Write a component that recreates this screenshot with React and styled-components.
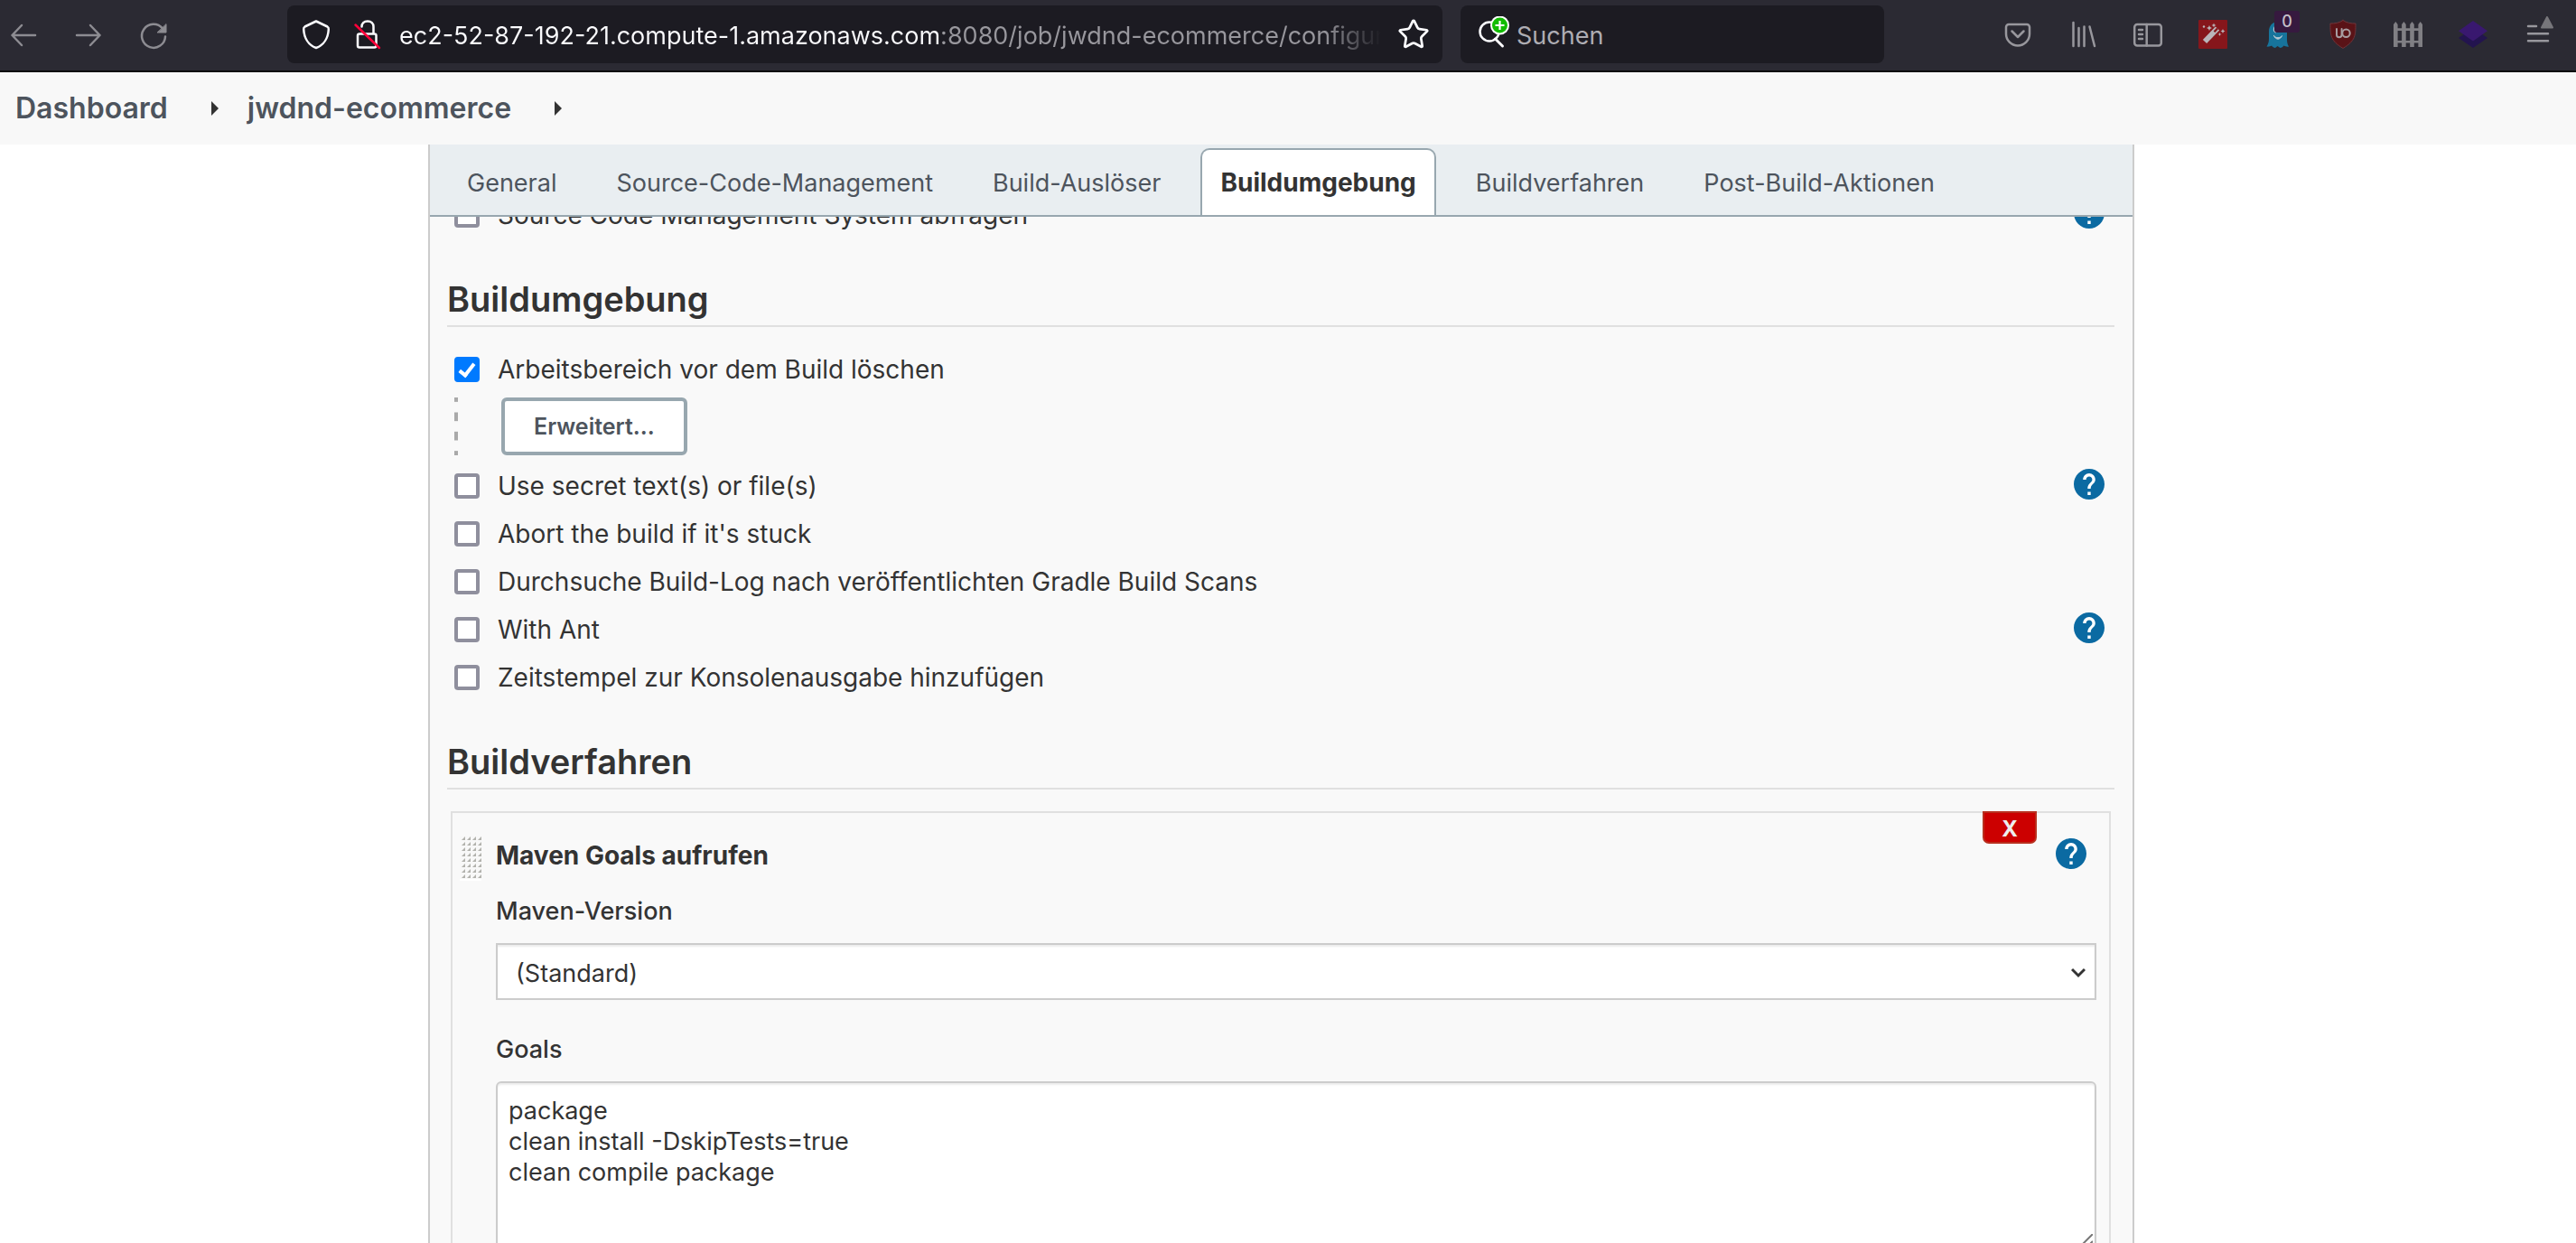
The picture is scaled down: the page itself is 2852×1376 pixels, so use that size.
import React from "react";
import styled, { createGlobalStyle, css } from "styled-components";
import { Star } from "lucide-react";

const GlobalStyle = createGlobalStyle`
  *, *::before, *::after { box-sizing: border-box; }
  body { margin: 0; background: #fff; }
  body, button, input, select, textarea {
    font-family: Inter, "Liberation Sans", sans-serif;
  }
`;

const Page = styled.div`
  display: flex;
  flex-direction: column;
  height: 100vh;
  overflow: hidden;
  color: #333;
  font-size: 28px;
`;

/* ---------- browser toolbar ---------- */

const BrowserBar = styled.header`
  display: flex;
  flex: none;
  align-items: center;
  height: 80px;
  padding: 6px 26px 8px 10px;
  background: #2b2a33;
  border-bottom: 2px solid #0c0c0d;
`;

const IconGroup = styled.div`
  display: flex;
  flex: none;
  gap: 40px;
`;

const IconButton = styled.button`
  position: relative;
  display: block;
  flex: none;
  width: 32px;
  height: 32px;
  padding: 0;
  border: 0;
  background: none;
  color: ${(p) => p.$color || "#98979d"};

  svg {
    display: block;
    overflow: visible;
  }
`;

const Badge = styled.span`
  position: absolute;
  left: 12px;
  top: -10px;
  width: 28px;
  height: 24px;
  border-radius: 3px;
  background: #36193f;
  color: #c4bfc8;
  font-size: 18px;
  font-weight: 500;
  line-height: 24px;
  text-align: center;
`;

const Field = styled.div`
  display: flex;
  flex: ${(p) => p.$grow} 1 0;
  align-items: center;
  gap: ${(p) => p.$gap};
  min-width: 0;
  height: 64px;
  padding: 0 16px;
  border-radius: 8px;
  background: #1c1b22;
`;

const AddressField = styled(Field)`
  margin: 0 20px 0 132px;
`;

const SearchField = styled(Field)`
  margin-right: 132px;
  padding: 0 20px;
`;

const FieldIcons = styled.div`
  display: flex;
  flex: none;
  gap: 24px;
`;

const BarInput = styled.input`
  flex: 1;
  min-width: 0;
  height: 40px;
  padding: 2px 0 0;
  border: 0;
  outline: 0;
  background: none;
  color: #fbfbfe;
  font-size: 27px;

  &::placeholder {
    color: #aeadb3;
    opacity: 1;
  }
`;

const AddressInput = styled(BarInput)`
  background-image: linear-gradient(
    90deg,
    #fbfbfe 600px,
    #98979d 600px,
    #98979d calc(100% - 64px),
    #1c1b22 100%
  );
  -webkit-background-clip: text;
  background-clip: text;
  color: transparent;
`;

/* ---------- breadcrumbs ---------- */

const Breadcrumbs = styled.nav`
  display: flex;
  flex: none;
  align-items: center;
  height: 80px;
  padding: 0 17px;
  background: #f8f8f8;
`;

const Crumb = styled.a`
  color: #4d545d;
  font-size: 32px;
  font-weight: 600;
  line-height: 40px;
  text-decoration: none;
`;

const CrumbArrow = styled.span`
  margin: 0 32px 0 48px;
  border: 8px solid transparent;
  border-right: 0;
  border-left-color: #333;
`;

/* ---------- configuration form ---------- */

const Viewport = styled.main`
  flex: 1;
  min-height: 0;
  overflow: hidden;
  padding: 0 489px 0 474px;
`;

const Panel = styled.div`
  border: solid #ccc;
  border-width: 0 2px;
  background: #f9f9f9;
`;

const TabBar = styled.nav`
  position: sticky;
  top: 0;
  z-index: 1;
  display: flex;
  gap: 22px;
  height: 80px;
  padding: 4px 19px 0;
  background: #e9eef1;
  border-bottom: 2px solid #98a7af;
`;

const Tab = styled.a`
  display: flex;
  align-items: center;
  padding: 0 20px;
  border: 2px solid transparent;
  border-bottom: 0;
  border-radius: 10px 10px 0 0;
  color: #4d545d;
  font-size: 27px;
  text-decoration: none;
  white-space: nowrap;

  ${(p) =>
    p.$active &&
    css`
      border-color: #98a7af;
      background: #fff;
      color: #333;
      font-size: 28px;
      font-weight: 700;
    `}
`;

const SCROLLED_BY = "29px";

const Form = styled.form`
  margin-top: -${SCROLLED_BY};
  padding: 0 20px 0 19px;
`;

const SectionTitle = styled.h2`
  margin: 44px 0 20px;
  padding-bottom: 6px;
  border-bottom: 2px solid #e0e0e0;
  font-size: 38px;
  font-weight: 600;
  line-height: 46px;
`;

const OptionRow = styled.div`
  display: flex;
  align-items: center;
  justify-content: space-between;
  height: 53px;
  padding: 0 11px 0 8px;
`;

const OptionLabel = styled.label`
  display: flex;
  align-items: center;
  gap: 20px;
  line-height: 34px;
`;

const Checkbox = styled.input`
  appearance: none;
  display: grid;
  place-items: center;
  width: 28px;
  height: 28px;
  margin: 0;
  border: 4px solid #8f8f9d;
  border-radius: 4px;
  background: #fff;

  &:checked {
    border-color: #007aff;
    background: #007aff;
  }

  &:checked::before {
    content: "";
    width: 10px;
    height: 18px;
    margin-bottom: 4px;
    border: solid #fff;
    border-width: 0 4px 4px 0;
    transform: rotate(38deg);
  }
`;

const HelpButton = styled.button`
  flex: none;
  width: 34px;
  height: 34px;
  margin: 0 0 4px;
  padding: 0;
  border: 0;
  border-radius: 50%;
  background: #fff;
  color: #0b6aa2;

  svg {
    display: block;
  }
`;

const Nested = styled.div`
  display: flex;
  gap: 48px;
  margin: 5px 8px 7px;

  &::before {
    content: "";
    width: 4px;
    background: linear-gradient(#a9a9a9 5px, transparent 5px 16px, #a9a9a9 16px);
    background-size: 4px 21px;
    background-repeat: round;
  }
`;

const AdvancedButton = styled.button`
  height: 64px;
  padding: 0 32px;
  border: 4px solid #98a7af;
  border-radius: 6px;
  background: #fff;
  color: #4d545d;
  font-size: 25px;
  font-weight: 600;
`;

const BuildStep = styled.section`
  position: relative;
  display: grid;
  grid-template-columns: 24px 1fr;
  gap: 16px;
  margin: 24px 4px 0;
  padding: 20px 14px 40px 8px;
  border: 2px solid #e0e0e0;
`;

const DragHandle = styled.div`
  height: 50px;
  margin-top: 5px;
  background: #fff;
  cursor: move;

  svg {
    display: block;
  }
`;

const DeleteButton = styled.button`
  position: absolute;
  top: -2px;
  right: 80px;
  width: 60px;
  height: 36px;
  padding: 2px 0 0;
  border: 2px solid #b8301f;
  border-radius: 0 0 7px 7px;
  background: #c00;
  color: #eee;
  font-size: 24px;
  font-weight: 700;
  line-height: 32px;
`;

const StepHeader = styled.div`
  display: flex;
  align-items: center;
  justify-content: space-between;
  height: 54px;
  margin-bottom: 16px;
  padding-right: 11px;
`;

const StepTitle = styled.h3`
  margin: 0;
  font-size: 28px;
  font-weight: 700;
`;

const FieldLabel = styled.label`
  display: block;
  margin-bottom: 16px;
  font-size: 27px;
  font-weight: 500;
  line-height: 38px;
`;

const ControlWrap = styled.div`
  position: relative;
  margin-bottom: 36px;
`;

const control = css`
  display: block;
  width: 100%;
  margin: 0;
  border: 2px solid #ccc;
  background: #fff;
  box-shadow: inset 0 2px 2px rgba(0, 0, 0, 0.075);
  color: #333;
  font-size: 27px;
`;

const Select = styled.select`
  ${control}
  appearance: none;
  height: 63px;
  padding: 4px 48px 0 20px;
  border-radius: 0;
`;

const SelectArrow = styled.svg`
  position: absolute;
  right: 12px;
  top: 27px;
  pointer-events: none;
`;

const TextArea = styled.textarea`
  ${control}
  height: 186px;
  padding: 14px 12px;
  border-radius: 6px;
  line-height: 34px;
  resize: none;
`;

const ResizeGrip = styled.svg`
  position: absolute;
  right: 4px;
  bottom: 1px;
  pointer-events: none;
`;

/* ---------- icons ---------- */

const Icon = ({ children, size = 32 }) => (
  <svg width={size} height={size} viewBox="0 0 32 32" fill="none" stroke="currentColor" strokeWidth="2.5" strokeLinecap="round" strokeLinejoin="round" aria-hidden="true">
    {children}
  </svg>
);

const BackIcon = () => <Icon><path d="M29 17H3.500M14 6 3.500 17 14 28" /></Icon>;
const ForwardIcon = () => <Icon><path d="M3 17h25.500M18 6l10.500 11L18 28" /></Icon>;
const ReloadIcon = () => (
  <Icon>
    <path d="M29 18.500A13 13 0 1 1 26 9.500" />
    <path d="M30 5v9h-9.500z" fill="currentColor" strokeWidth="1" />
  </Icon>
);
const ShieldIcon = () => (
  <Icon>
    <path d="M16 1.500 28.500 7.500Q30 8.300 29.800 10.500C29.300 20 24.500 28 16 31 7.500 28 2.700 20 2.200 10.500Q2 8.300 3.500 7.500z" />
  </Icon>
);
const InsecureIcon = () => (
  <Icon>
    <path d="M10.500 7.500C10.500 4 13 1.500 17 1.500s6.500 2.500 6.500 6V15.500M8 15.500H24.500a2 2 0 0 1 2 2V28.500a2 2 0 0 1-2 2H8a2 2 0 0 1-2-2V17.500a2 2 0 0 1 2-2z" />
    <path d="M3.500 5.500 30 31" stroke="#ff0039" />
  </Icon>
);
const SearchAddIcon = () => (
  <svg width="36" height="40" viewBox="0 0 36 40" fill="none" aria-hidden="true">
    <circle cx="12" cy="17" r="10.500" stroke="#fbfbfe" strokeWidth="2.500" />
    <path d="m18.500 25 8 8" stroke="#fbfbfe" strokeWidth="3" strokeLinecap="round" />
    <circle cx="23.500" cy="10" r="10.500" fill="#fff" />
    <circle cx="23.500" cy="10" r="8.500" fill="#12bc00" />
    <path d="M23.500 5v10M18.500 10h10" stroke="#fff" strokeWidth="2.200" />
  </svg>
);
const PocketIcon = () => (
  <Icon>
    <path d="M3 8a3 3 0 0 1 3-3h20a3 3 0 0 1 3 3v7.500a13 13 0 0 1-26 0z" />
    <path d="m9.500 12.500 6.500 6.500 6.500-6.500" />
  </Icon>
);
const LibraryIcon = () => (
  <Icon>
    <path d="M5.500 3v26M11.500 9v20M17.500 7.500V29M23.500 7.500l5.500 21.500" />
  </Icon>
);
const SidebarIcon = () => (
  <Icon>
    <rect x="1.200" y="5" width="29.600" height="23.500" rx="3" />
    <path d="M14.700 5v23.500M6 11h4M6 16h4M6 21h4" />
  </Icon>
);
const WandIcon = () => (
  <Icon>
    <rect width="32" height="32" rx="1" fill="#86161b" stroke="none" />
    <path d="M7 24 21 9.500" stroke="#b9b5b9" strokeWidth="6" strokeLinecap="butt" />
    <path d="m17.500 13.200 3.500-3.700" stroke="#86161b" strokeWidth="2.400" strokeLinecap="butt" />
    <g fill="#b9b5b9" stroke="none">
      <path d="m12 6 .9 2.100L15 9l-2.100.9L12 12l-.9-2.100L9 9l2.100-.9z" />
      <path d="m17 3.500.7 1.800 1.800.7-1.800.7-.7 1.800-.7-1.800-1.800-.7 1.800-.7z" />
      <path d="m27 10 .8 1.700 1.700.8-1.700.8-.8 1.700-.8-1.700-1.700-.8 1.700-.8z" />
      <path d="m23.500 14 .6 1.400 1.400.6-1.400.6-.6 1.400-.6-1.400-1.400-.6 1.400-.6z" />
      <circle cx="6" cy="7.500" r="1.200" />
    </g>
  </Icon>
);
const GhostIcon = () => (
  <Icon>
    <path d="M16 2C9.500 2 6 7 6 13v8c0 4-1 6-2.500 8.500 2 .5 4-.3 5.500-1 1 1.500 2.500 2.500 4 2.500l2.500-2 3 2c1.500 0 3-1 4-2.500 1.500.8 3.500 1.500 5.500 1C26.500 27 26 25 26 21v-8c0-6-3.500-11-10-11z" fill="#17749c" stroke="none" />
    <path d="M11.500 17.500c2 3 7 3 9 0-2 5-7 5-9 0zM12 8c-1.500 3-.5 6 1.500 6z" fill="#b6c8d2" stroke="#b6c8d2" strokeWidth="1" />
  </Icon>
);
const UblockIcon = () => (
  <Icon>
    <path d="M16 .5C20 3.500 25 4 30 4c0 13 0 19-14 27.500C2 23 2 17 2 4c5 0 10-.5 14-3.500z" fill="#5a1317" stroke="#70353a" strokeWidth="1" />
    <path d="M9 10v6.500a2.800 2.800 0 0 0 5.600 0V10" stroke="#a79da1" strokeWidth="2" />
    <circle cx="19.500" cy="14.800" r="4.200" stroke="#a79da1" strokeWidth="2" />
  </Icon>
);
const FenceIcon = () => (
  <Icon>
    <path d="M0 30V5l2.300-3 2.300 3v25zM9.100 30V5l2.300-3 2.300 3v25zM18.200 30V5l2.300-3 2.300 3v25zM27.400 30V5l2.300-3L32 5v25zM2 9.300h28V12H2zM2 23h28v2.500H2z" fill="#807f84" stroke="none" />
  </Icon>
);
const LayersIcon = () => (
  <Icon>
    <path d="m16 9 16 11-16 11L0 20z" fill="#23144f" stroke="none" />
    <path d="m16 1 16 11.200-16 11.200L0 12.200z" fill="#39186f" stroke="none" />
  </Icon>
);
const MenuIcon = () => (
  <Icon>
    <path d="M5 7h9M5 15.200h22M5 23.300h22" />
    <path d="M26-3 20 8.500h12z" fill="#77767b" stroke="#77767b" strokeWidth="2" />
  </Icon>
);

const HelpIcon = () => (
  <svg width="34" height="34" viewBox="2 2 20 20" fill="currentColor" aria-hidden="true">
    <path d="M12 2C6.480 2 2 6.480 2 12s4.480 10 10 10 10-4.480 10-10S17.520 2 12 2zm1 17h-2v-2h2v2zm2.070-7.750-.9.920C13.450 12.900 13 13.500 13 15h-2v-.5c0-1.100.450-2.100 1.170-2.830l1.240-1.260c.370-.360.590-.860.590-1.410 0-1.100-.9-2-2-2s-2 .9-2 2H8c0-2.210 1.790-4 4-4s4 1.790 4 4c0 .880-.360 1.680-.930 2.250z" />
  </svg>
);

const Help = ({ topic }) => (
  <HelpButton type="button" aria-label={`Hilfe zu: ${topic}`}>
    <HelpIcon />
  </HelpButton>
);

const HandleDots = () => (
  <svg width="24" height="50" aria-hidden="true">
    <defs>
      <pattern id="handle-dot" width="6" height="6" patternUnits="userSpaceOnUse">
        <rect width="6" height="6" fill="#f8f8f8" />
        <path d="M6 1v4H2z" fill="#b2b2ad" />
      </pattern>
    </defs>
    <rect width="24" height="48" fill="url(#handle-dot)" />
  </svg>
);

/* ---------- page ---------- */

const TABS = ["General", "Source-Code-Management", "Build-Auslöser", "Buildumgebung", "Buildverfahren", "Post-Build-Aktionen"];

const ENVIRONMENT_OPTIONS = [
  { id: "secrets", label: "Use secret text(s) or file(s)", help: true },
  { id: "abort", label: "Abort the build if it's stuck" },
  { id: "scans", label: "Durchsuche Build-Log nach veröffentlichten Gradle Build Scans" },
  { id: "ant", label: "With Ant", help: true },
  { id: "timestamps", label: "Zeitstempel zur Konsolenausgabe hinzufügen" },
];

const EXTENSIONS = [
  { label: "Pocket", icon: <PocketIcon /> },
  { label: "Bibliothek", icon: <LibraryIcon /> },
  { label: "Sidebar", icon: <SidebarIcon /> },
  { label: "Wand", icon: <WandIcon /> },
  { label: "Ghostery", icon: <GhostIcon />, badge: "0" },
  { label: "uBlock", icon: <UblockIcon /> },
  { label: "Container", icon: <FenceIcon /> },
  { label: "Ebenen", icon: <LayersIcon /> },
  { label: "Menü", icon: <MenuIcon /> },
];

const Option = ({ id, label, help, checked = false }) => (
  <OptionRow>
    <OptionLabel htmlFor={id}>
      <Checkbox type="checkbox" id={id} defaultChecked={checked} />
      {label}
    </OptionLabel>
    {help && <Help topic={label} />}
  </OptionRow>
);

export default function App() {
  return (
    <Page>
      <GlobalStyle />
      <BrowserBar>
        <IconGroup>
          <IconButton aria-label="Zurück" $color="#8d8c92"><BackIcon /></IconButton>
          <IconButton aria-label="Vor" $color="#8d8c92"><ForwardIcon /></IconButton>
          <IconButton aria-label="Neu laden" $color="#8d8c92"><ReloadIcon /></IconButton>
        </IconGroup>
        <AddressField $grow={1247} $gap="20px">
          <FieldIcons>
            <IconButton aria-label="Schutz" $color="#fbfbfe"><ShieldIcon /></IconButton>
            <IconButton aria-label="Verbindung nicht sicher" $color="#fbfbfe"><InsecureIcon /></IconButton>
          </FieldIcons>
          <AddressInput
            aria-label="Adresse"
            defaultValue="ec2-52-87-192-21.compute-1.amazonaws.com:8080/job/jwdnd-ecommerce/configure"
          />
          <IconButton aria-label="Lesezeichen" $color="#fbfbfe">
            <Star size={32} viewBox="1.500 1.500 21 21" strokeWidth={1.8} />
          </IconButton>
        </AddressField>
        <SearchField $grow={429} $gap="6px">
          <SearchAddIcon />
          <BarInput aria-label="Suchen" placeholder="Suchen" />
        </SearchField>
        <IconGroup>
          {EXTENSIONS.map(({ label, icon, badge }) => (
            <IconButton key={label} aria-label={label}>
              {icon}
              {badge && <Badge>{badge}</Badge>}
            </IconButton>
          ))}
        </IconGroup>
      </BrowserBar>

      <Breadcrumbs aria-label="Pfad">
        <Crumb href="#dashboard">Dashboard</Crumb>
        <CrumbArrow />
        <Crumb href="#job">jwdnd-ecommerce</Crumb>
        <CrumbArrow />
      </Breadcrumbs>

      <Viewport>
        <Panel>
          <TabBar>
            {TABS.map((tab) => (
              <Tab key={tab} href={`#${tab}`} $active={tab === "Buildumgebung"}>
                {tab}
              </Tab>
            ))}
          </TabBar>
          <Form>
            <Option id="scm-poll" label="Source Code Management System abfragen" help />

            <SectionTitle>Buildumgebung</SectionTitle>
            <Option id="clean" label="Arbeitsbereich vor dem Build löschen" checked />
            <Nested>
              <AdvancedButton type="button">Erweitert...</AdvancedButton>
            </Nested>
            {ENVIRONMENT_OPTIONS.map((option) => (
              <Option key={option.id} {...option} />
            ))}

            <SectionTitle>Buildverfahren</SectionTitle>
            <BuildStep>
              <DragHandle><HandleDots /></DragHandle>
              <div>
                <StepHeader>
                  <StepTitle>Maven Goals aufrufen</StepTitle>
                  <Help topic="Maven Goals aufrufen" />
                </StepHeader>
                <FieldLabel htmlFor="maven-version">Maven-Version</FieldLabel>
                <ControlWrap>
                  <Select id="maven-version">
                    <option>(Standard)</option>
                  </Select>
                  <SelectArrow width="16" height="12" viewBox="0 0 16 12" fill="none" stroke="#333" strokeWidth="3">
                    <path d="m1 2 7 7 7-7" />
                  </SelectArrow>
                </ControlWrap>
                <FieldLabel htmlFor="goals">Goals</FieldLabel>
                <ControlWrap>
                  <TextArea
                    id="goals"
                    spellCheck={false}
                    defaultValue={"package\nclean install -DskipTests=true\nclean compile package"}
                  />
                  <ResizeGrip width="16" height="16" viewBox="0 0 16 16" fill="none" stroke="#777" strokeWidth="2">
                    <path d="M0 16 16 0M8 16l8-8" />
                  </ResizeGrip>
                </ControlWrap>
              </div>
              <DeleteButton type="button" aria-label="Löschen">X</DeleteButton>
            </BuildStep>
          </Form>
        </Panel>
      </Viewport>
    </Page>
  );
}
